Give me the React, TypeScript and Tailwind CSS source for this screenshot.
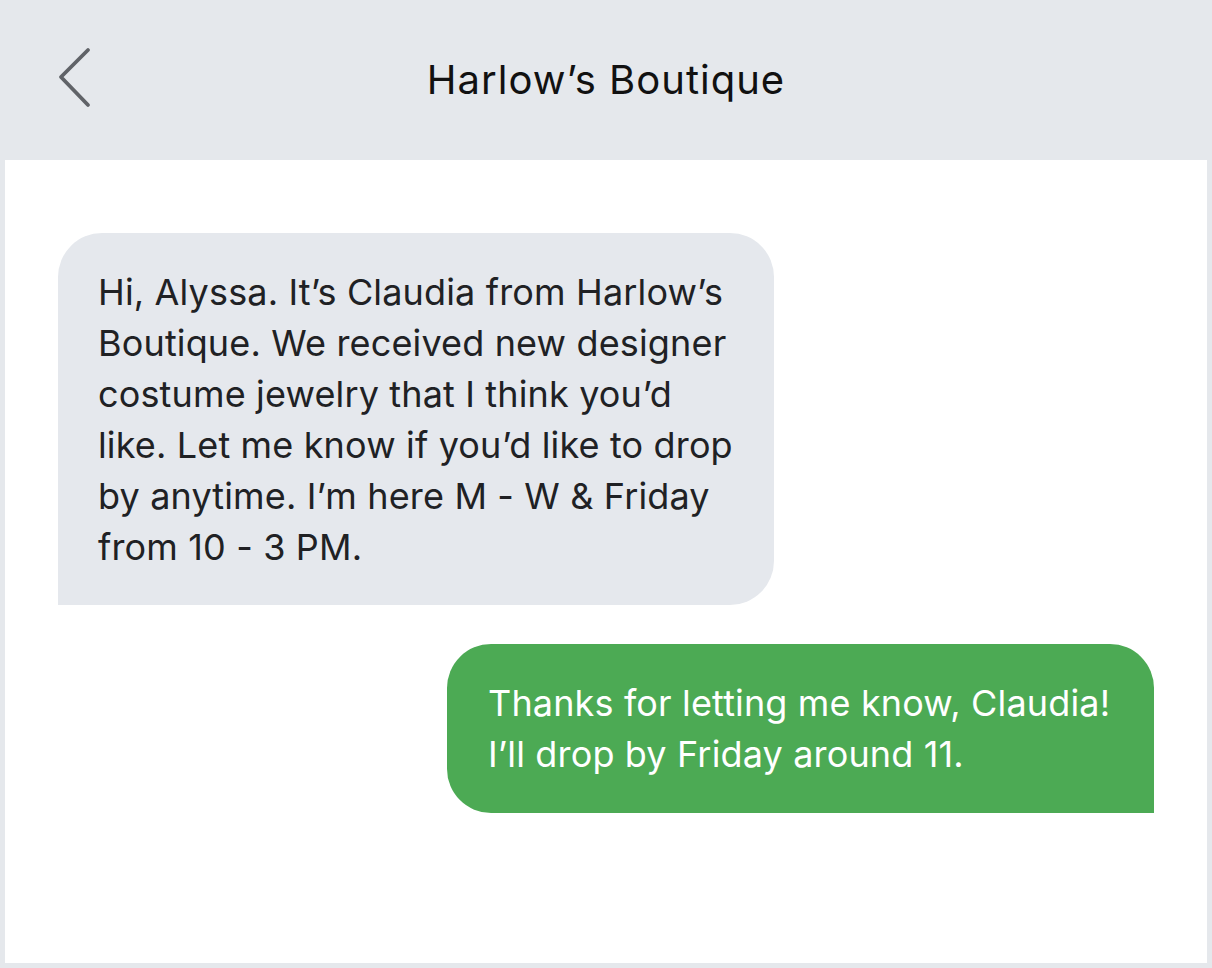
import React from "react";

export default function App() {
  return (
    <div
      className="w-[1212px] h-[968px] bg-[#e5e8ec] flex flex-col"
      style={{ fontFamily: "Inter, 'Noto Sans', sans-serif" }}
    >
      <header className="h-[160px] shrink-0 relative flex items-center justify-center pb-[1px]">
        <button className="absolute left-[56px] top-[46px] w-[38px] h-[64px] flex items-center justify-center text-[#606368]">
          <svg width="38" height="64" viewBox="0 0 38 64" fill="none">
            <path d="M32 4 L5 31 L32 59" stroke="currentColor" strokeWidth="3.8" strokeLinecap="round" strokeLinejoin="round" />
          </svg>
        </button>
        <h1 className="text-[40px] leading-none text-[#111111] font-normal tracking-[1px]">Harlow’s Boutique</h1>
      </header>
      <main className="flex-1 bg-white mx-[5px] mb-[5px] px-[53px] pt-[73px] flex flex-col gap-[39px]">
        <div className="self-start w-[716px] bg-[#e5e8ed] rounded-tl-[44px] rounded-tr-[44px] rounded-br-[44px] pl-[40px] pr-[20px] pt-[34px] pb-[32px] text-[36px] leading-[51px] tracking-[0.15px] text-[#202124] whitespace-nowrap">
          Hi, Alyssa. It’s Claudia from Harlow’s
          <br />
          Boutique. We received new designer
          <br />
          costume jewelry that I think you’d
          <br />
          like. Let me know if you’d like to drop
          <br />
          by anytime. I’m here M - W &amp; Friday
          <br />
          from 10 - 3 PM.
        </div>
        <div className="self-end w-[707px] bg-[#4caa54] rounded-tl-[44px] rounded-tr-[44px] rounded-bl-[44px] pl-[41px] pr-[20px] pt-[34px] pb-[33px] text-[36px] leading-[51px] tracking-[0.15px] text-white whitespace-nowrap">
          Thanks for letting me know, Claudia!
          <br />
          I’ll drop by Friday around 11.
        </div>
      </main>
    </div>
  );
}
